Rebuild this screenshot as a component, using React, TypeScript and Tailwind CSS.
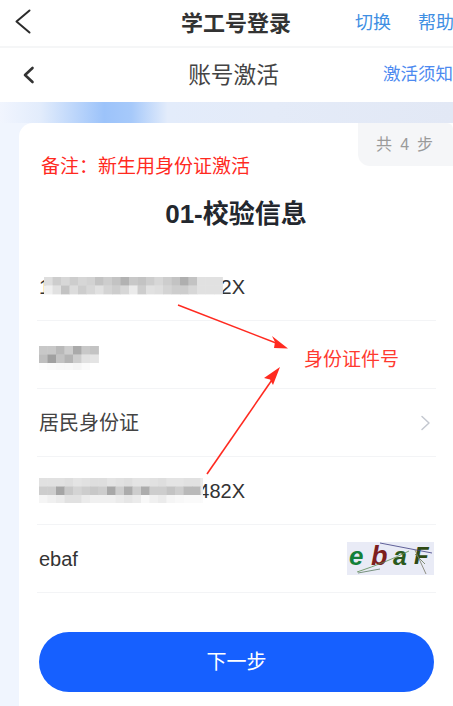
import React from "react";

const sans = '"Liberation Sans","Noto Sans CJK SC",sans-serif';

function Mosaic({ width, height, cell, rows, x0 = 0 }: { width: number; height: number; cell: number; rows: number[][]; x0?: number }) {
  return (
    <svg width={width} height={height} viewBox={`0 0 ${width} ${height}`} className="block" style={{ filter: "blur(0.6px)" }}>
      {rows.map((row, r) =>
        row.map((v, c) => (
          <rect key={`${r}-${c}`} x={x0 + c * cell} y={r * cell} width={cell + 0.4} height={cell + 0.4} fill={`rgb(${v},${v},${v})`} />
        ))
      )}
    </svg>
  );
}

const m1 = [
  [222, 205, 215, 205, 214, 210, 195, 205, 195, 178, 200, 195, 205, 215, 205, 195, 175, 195, 225, 225, 225],
  [240, 225, 195, 220, 205, 215, 225, 212, 205, 215, 235, 205, 225, 222, 212, 205, 205, 215, 225, 225, 225],
];
const m2 = [
  [200, 200, 185, 205, 170, 200, 195],
  [190, 160, 195, 180, 205, 225, 228],
  [252, 250, 248, 248, 245, 250, 255],
];
const m3 = [
  [225, 225, 225, 222, 228, 225, 222, 222, 228, 225, 222, 228, 228, 225, 222, 228, 228, 225, 225, 235],
  [205, 205, 165, 200, 212, 205, 200, 205, 168, 205, 172, 205, 172, 205, 205, 195, 205, 185, 185, 235],
  [245, 240, 235, 225, 225, 235, 240, 240, 240, 235, 230, 235, 248, 240, 235, 245, 248, 250, 250, 250],
];

function Row({ children }: { children: React.ReactNode }) {
  return (
    <div className="h-[68px] mr-[17px] ml-[18px] pl-[2px] flex items-center justify-between border-b border-[#f3f4f6]">
      {children}
    </div>
  );
}

export default function App() {
  return (
    <div className="relative w-[453px] h-[706px] overflow-hidden bg-white flex flex-col" style={{ fontFamily: sans }}>
      <header className="h-[48px] shrink-0 relative flex items-center justify-center pl-[19px] border-b-2 border-[#f5f6f7]">
        <svg className="absolute left-[14px] top-[9px]" width="18" height="25" viewBox="0 0 18 25" fill="none">
          <path d="M15.5 1.5 2.5 12.5 15.5 23.5" stroke="#2b2b2b" strokeWidth="2" strokeLinecap="round" strokeLinejoin="round" />
        </svg>
        <span className="text-[22px] font-bold text-[#333333]">学工号登录</span>
        <div className="absolute left-[355px] top-[10px] flex gap-[27px] text-[18px] text-[#3f8fe3] whitespace-nowrap">
          <span>切换</span>
          <span>帮助</span>
        </div>
      </header>

      <div className="h-[54px] shrink-0 relative flex items-center justify-center pl-[14px]">
        <svg className="absolute left-[22px] top-[18px]" width="13" height="18" viewBox="0 0 13 18" fill="none">
          <path d="M10.5 2 3 9l7.5 7" stroke="#333333" strokeWidth="2.6" strokeLinecap="round" strokeLinejoin="round" />
        </svg>
        <span className="text-[22.7px] text-[#444444]">账号激活</span>
        <span className="absolute left-[383px] top-[13px] text-[17.5px] text-[#4d8af0] whitespace-nowrap">激活须知</span>
      </div>

      <main className="flex-1 pt-[21px] pl-[19px] bg-[#f0f5fe] bg-no-repeat bg-[length:100%_21px] bg-[linear-gradient(90deg,#f1f5fe_0%,#e2ecfc_9%,#9cc3fa_23%,#a6c9fa_29%,#e3ecfb_37%,#e4ebf8_60%,#e2e8f5_100%)]">
        <section className="relative h-full bg-white rounded-tl-[14px] flex flex-col">
          <div className="absolute right-0 top-0 w-[95px] h-[43px] bg-[#f5f6f8] rounded-bl-[12px] rounded-tr-[6px] flex items-center justify-center text-[16px] text-[#9a9a9a] tracking-[1.8px]">
            共 4 步
          </div>
          <p className="pt-[30px] pl-[22px] h-[59px] text-[19px] leading-[28px] text-[#ff2a1f] whitespace-nowrap">备注：新生用身份证激活</p>
          <h1 className="h-[71px] pt-[15px] text-center text-[26px] leading-[34px] font-bold text-[#23272e]">01-校验信息</h1>

          <Row>
            <span className="relative text-[20px] text-[#333333] w-[206px] block">
              <span>1</span>
              <span className="absolute right-0 top-0">2X</span>
              <span className="absolute left-[5px] top-[5px]">
                <Mosaic width={179} height={18} cell={8.5} rows={m1} />
              </span>
            </span>
          </Row>
          <Row>
            <div className="mt-[7px]">
              <Mosaic width={60} height={24} cell={8.5} rows={m2} />
            </div>
          </Row>
          <Row>
            <span className="text-[20px] text-[#444444]">居民身份证</span>
            <svg className="mr-[5px]" width="11" height="16" viewBox="0 0 11 16" fill="none">
              <path d="M2 1.5 9 8l-7 6.5" stroke="#c4c8d0" strokeWidth="1.5" strokeLinecap="round" strokeLinejoin="round" />
            </svg>
          </Row>
          <Row>
            <span className="relative text-[20px] text-[#333333] w-[206px] block text-right">
              <span>482X</span>
              <span className="absolute left-0 top-[2px]">
                <Mosaic width={164} height={25} cell={8.5} rows={m3} />
              </span>
            </span>
          </Row>
          <Row>
            <span className="text-[20px] text-[#333333]">ebaf</span>
            <svg width="87" height="33" viewBox="0 0 87 33" className="mr-[2px] overflow-visible">
              <rect width="87" height="33" fill="#e9ebf6" />
              <text x="2" y="23" fontSize="26" fontWeight="700" fontStyle="italic" fontFamily="Liberation Sans" fill="#14803a">e</text>
              <text x="24" y="23" fontSize="27" fontWeight="700" fontStyle="italic" fontFamily="Liberation Sans" fill="#7d1e1e">b</text>
              <text x="46" y="23" fontSize="25" fontWeight="700" fontStyle="italic" fontFamily="Liberation Sans" fill="#2b5a1e">a</text>
              <text x="67" y="22" fontSize="24" fontWeight="700" fontStyle="italic" fontFamily="Liberation Sans" fill="#2f4a14">F</text>
              <path d="M33 1 85 11" stroke="#3c3c80" strokeWidth="0.8" fill="none" />
              <path d="M10 30 Q 40 20 62 9" stroke="#5a8a50" strokeWidth="0.8" fill="none" />
              <path d="M11 31 33 27" stroke="#5a7a60" strokeWidth="0.8" fill="none" />
              <path d="M68 8 79 32" stroke="#777766" strokeWidth="0.8" fill="none" />
              <path d="M68 12 78 22" stroke="#667755" strokeWidth="0.8" fill="none" />
            </svg>
          </Row>

          <div className="mt-[39px] ml-[20px] mr-[19px] h-[60px] rounded-full bg-[#1660ff] flex items-center justify-center text-[20px] text-white">
            下一步
          </div>
        </section>
      </main>

      <span className="absolute left-[304px] top-[347px] text-[19px] leading-[26px] text-[#ff3a30] whitespace-nowrap">身份证件号</span>
      <svg className="absolute left-0 top-0 pointer-events-none" width="453" height="706" viewBox="0 0 453 706" fill="none">
        <path d="M178 305 L276 343" stroke="#ff2a20" strokeWidth="1.4" />
        <path d="M288 348.5 L272 336 L275 342 L274 348 Z" fill="#ff2a20" />
        <path d="M207 474 L274 377" stroke="#ff2a20" strokeWidth="1.6" />
        <path d="M280 367 L264 378 L270 379.5 L273 385 Z" fill="#ff2a20" />
      </svg>
    </div>
  );
}
